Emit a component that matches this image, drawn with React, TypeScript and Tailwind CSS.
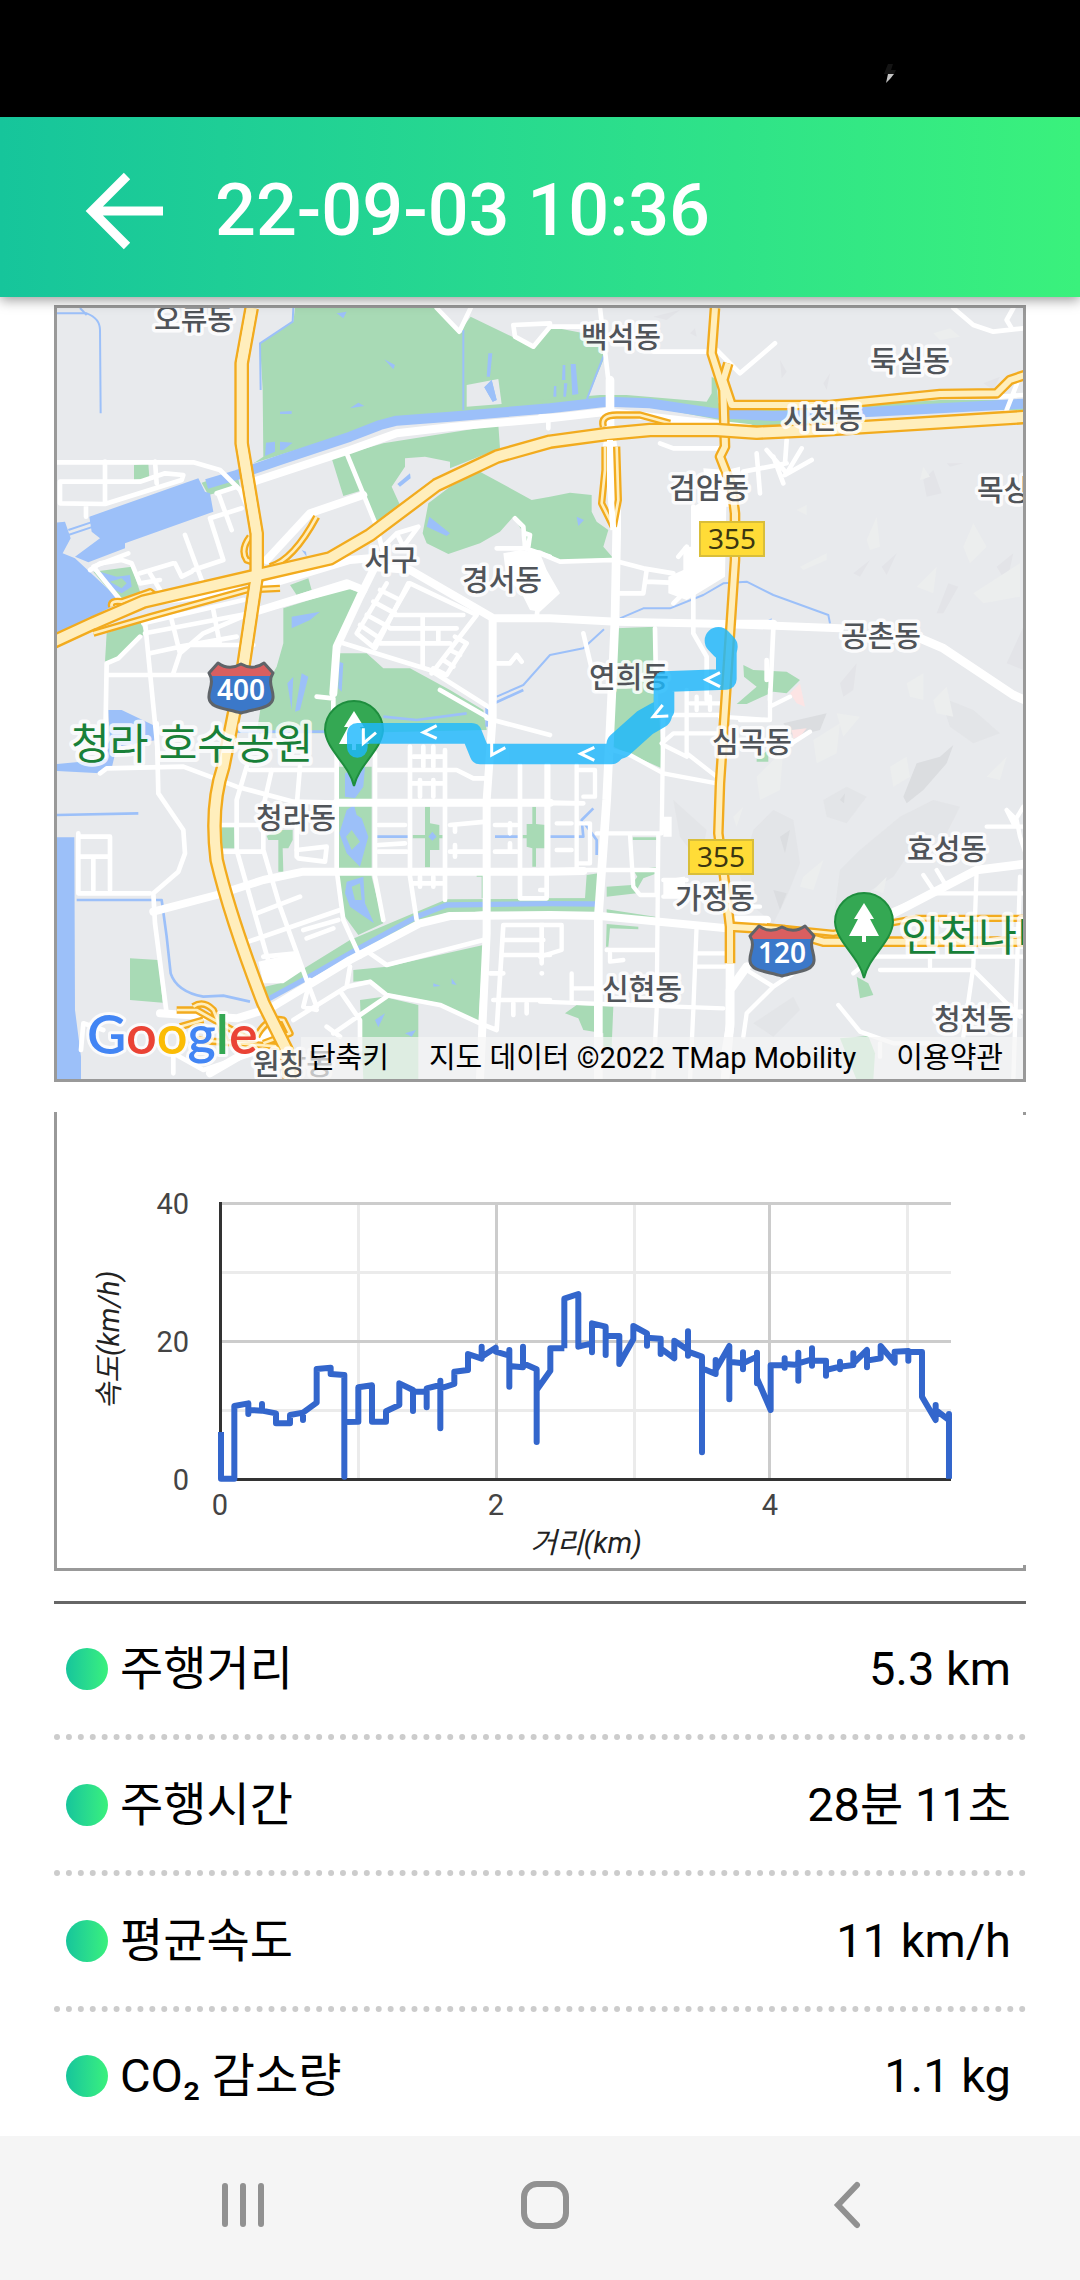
import React from "react";

const LAND = "#e8eaed";
const PARK = "#a8dab5";
const WATER = "#9cc0f9";

/* Map artwork is drawn in tiles; each tile has its own origin. */
const parks: [string, string[]][] = [
  ["translate(0 0)", [
    "M735 24H1160L1228 95L1262 50L1390 112L1450 145L1500 80L1665 112L1660 180L1610 300L1500 320L1240 335L1040 355L900 400L610 490L640 470L638 270L630 130L730 65Z",
    "M845 475L1000 430L1345 375L1350 445L1200 505V485L1125 470L1065 475V500L1025 560L1050 615L980 670L940 570L880 588Z",
    "M1290 515L1445 600L1500 590L1560 578L1625 585V635L1640 665L1675 690L1660 740L1690 775L1530 780L1470 750H1420L1415 690L1390 650L1350 695L1290 730L1195 762L1130 730L1118 700L1135 610L1200 560Z",
    "M252 495L295 490L298 535L252 540Z",
    "M720 855L775 835L785 870L740 885Z",
    "M130 815L245 800L275 890L210 910Z",
    "M170 1000L270 960L285 1000L200 1075L165 1085Z",
    "M700 925L890 865L935 880L875 1000L865 1060H950L1000 1105H1080L1200 1170L1300 1230L1310 1290L860 1300H620L640 1170L680 1100L700 1030Z",
    "M455 548L560 512L570 560L475 585Z",
  ]],
  ["translate(1470 0)", [
    "M515 230L530 240L535 310L700 330H1450V300H1200L900 320V372L600 380L540 360L330 320L200 300L0 320V300L180 285H260L500 305L515 280Z",
    "M230 985L345 980L352 1100L365 1405L220 1340Z",
    "M610 1095L640 1110L740 1115L780 1140L740 1180L700 1175L620 1212H590L650 1160L612 1130Z",
  ]],
  ["translate(0 1170)", [
    "M865 230H965V560L1000 700L925 735L870 660L862 540Z",
    "M240 805L325 810L338 938L240 930Z",
    "M645 890L690 880L900 750L1190 628L1650 625V665H1300L1190 668L1100 700L910 790L700 910L650 925Z",
    "M910 840L1010 830L1300 765L1285 1000L1170 940L1010 910L960 870L910 875Z",
    "M930 930L1000 920L1105 945V1170H940Z",
    "M515 412H552L555 475H515Z",
    "M650 438L680 420H728V450L715 475H698L700 545H685V450H655Z",
    "M1088 435H1125V350H1140V400L1168 405V435H1178V445H1168V480H1140V532H1125V445H1088Z",
    "M1418 435H1430V402H1447V350H1458V402L1488 405V475H1458V530H1447V475L1430 470V445H1418Z",
    "M1280 552H1300V625H1295V560H1280Z",
  ]],
  ["translate(1470 1170)", [
    "M140 555L175 550V640H0V625H135Z",
    "M200 590L275 585L290 610L200 620Z",
    "M280 540L355 530V548L310 565L290 600L278 580L292 560Z",
    "M200 658L355 682V692L200 668ZM200 702L295 710V718L210 715L205 770H198ZM278 442H355V490H350V450H278Z",
    "M75 970L110 945L220 950L215 1070L190 1070V1030L130 1020L115 985Z",
    "M950 860L985 880L1000 915L960 925Z",
    "M900 1045L985 1038L1005 1090L1000 1170H950Z",
    "M650 205L685 180V215H650Z",
  ]],
];

const waters: [string, string[]][] = [
  ["translate(0 0)", [
    "M0 670L45 665L62 715L38 760L75 775L215 905L0 1015Z",
    "M118 650L445 535L465 575L480 580L490 635L225 730V745L115 787L75 770L150 715L125 695Z",
    "M648 428L675 425V455L645 468ZM690 425L728 428L700 450H690ZM690 335L725 333V342H690ZM900 325L925 308L943 318ZM1003 178L1035 195L1030 208ZM860 40L890 35L880 55ZM1315 160H1327L1320 230H1310ZM1303 262L1325 240L1340 300L1328 305ZM1042 552L1080 520L1082 535L1050 560ZM1138 650L1200 700L1190 708L1130 680ZM755 750L768 755L770 770Z",
    "M150 815L200 830L240 825L245 860L215 880L175 860ZM725 950L810 935L780 960L725 985ZM868 1085L880 1090L875 1175L865 1165ZM712 1150L730 1130L725 1230ZM755 1120L775 1130L750 1230L735 1235Z",
  ]],
  ["translate(1470 0)", [
    "M92 192H107L115 282L97 285ZM68 195H76V240H66ZM42 258H49V290H40ZM72 250H82L78 290H70ZM110 650L132 660L115 678ZM680 962L695 955V967Z",
  ]],
  ["translate(0 1170)", [
    "M0 442H73L75 960L93 1100V1170H0Z",
    "M175 60H215L320 110V150L200 170L185 235L150 250L21 243V222L150 210L180 150Z",
    "M885 250L945 230L940 290L915 325L885 320ZM890 360L912 345L920 375L935 385L955 440L930 530L890 490L868 430ZM890 575L940 560L945 640L972 700L900 650L885 610Z",
    "M1135 440L1147 425L1160 440L1147 452ZM975 990L1005 970L985 1012ZM1205 865L1220 885L1205 882ZM1150 880L1172 888L1150 890ZM1065 1030L1098 1020L1085 1040Z",
  ]],
];

const streams: [string, number, string[]][] = [
  ["translate(0 0)", 30, ["M470 552L560 525L690 480L900 410L990 375L1040 362L1200 350L1500 325L1670 305L1800 310L2000 340L2170 348L2470 335L2670 325L2940 310"]],
  ["translate(0 0)", 6, [
    "M21 40H110Q150 55 150 90L152 340", "M1240 90V330", "M730 24L728 65L630 130L632 270",
    "M1340 1190L1420 1155L1500 1065L1600 1045L1662 988M1710 955L1780 925L1860 925L1960 885L2020 850L2090 845L2170 885L2335 945L2340 970",
    "M1610 300L1640 220L1662 165", "M55 690L130 665M55 705L130 680", "M90 24L110 45",
  ]],
  ["translate(0 1170)", 8, [
    "M600 935L520 917L460 920Q380 905 362 850L350 740L335 630H80",
    "M560 125H860", "M21 375L265 370", "M980 440H1075M1335 440H1405M1490 440H1600L1595 390L1630 355M1600 395L1640 450V495",
    "M1000 80L1100 90L1250 70", "M1310 110V50L1420 0",
  ]],
  ["translate(0 1170)", 16, ["M650 930L760 870L900 790L1100 680L1190 645L1490 641L1640 642"]],
];

const roads: [string, number, string[]][] = [
  ["translate(0 0)", 14, [
    "M21 487L430 487L510 510L570 570L600 640", "M165 485V610M30 545H270L345 520L400 525L395 540L165 612L30 610V545M315 485L320 550M108 615V650",
    "M610 545L900 450L1040 400L1100 390M890 460L980 680L1000 760", "M500 580L560 560M505 580L545 690M480 655L575 625M480 655L520 780L430 810M405 705L455 840M375 790L395 830L425 815M270 820L370 790M300 820L330 870",
    "M235 760L130 800L215 905", "M120 810L150 790L215 780L245 790L270 850L330 840",
    "M280 970L580 900M285 1000L600 940L900 860M300 1060L390 1040L560 1010M365 960L390 1060L370 1120M490 930L510 1035M285 965L325 1370M170 1125H490M165 1370L170 1090L205 1075L270 1010M390 1060L460 1000L600 940M420 1035H610",
    "M1000 740L1040 700L1105 680L1060 740L1040 700", "M1395 655L1420 680L1425 745L1340 745M1425 745L1500 770M1425 700L1440 705L1435 740",
    "M1010 850L920 1000L975 1045L1075 850M990 870L1050 900M970 905L1035 940M950 945L1015 980M930 975L990 1015",
    "M880 1030L1140 1110L1330 1230M970 1040L1080 850L1280 945L1145 1120M1035 945H1240M1020 985L1220 985M990 1030H1200M1118 950V1100M1165 985V1030M1215 1010L1250 1030L1190 1125L1150 1105M1340 1090H1380L1400 1065L1415 1085M1200 1050L1230 1065M1180 1080L1210 1100",
    "M1160 24L1228 95L1262 24M1390 75L1500 70M1390 75L1395 110L1450 140L1500 80L1650 80M1470 870L1460 950",
    "M1600 1000L1640 1170",
  ]],
  ["translate(0 0)", 24, [
    "M610 545L900 450L1040 400L1210 380L1500 355L1670 335L1800 350L2100 385", "M650 780L780 640L940 585", "M960 800L1080 810L1330 955H1500L1700 965L2030 972L2370 985",
    "M980 790L930 890L860 1040L850 1180", "M340 900L600 870L900 780L960 775", "M600 940L890 850L940 870", "M1328 960V1250L1310 1500V1900L1290 2337",
  ]],
  ["translate(1470 0)", 14, [
    "M180 24L205 240L210 350", "M340 155H510M530 150L600 220L705 130", "M210 380L195 440M360 430L400 445H540", "M650 460L660 580M680 450L740 520L785 445M740 420L735 490M700 470L730 550M735 525L815 480M610 515L740 490",
    "M0 760L60 785L215 780L310 805L400 820M235 880H310L320 810M320 845L440 850M440 740L415 770M460 620V1000L500 1070V1200M345 985L350 1250",
    "M700 985L690 1200M680 1080V1140", "M1240 24L1300 75L1360 95L1450 85M1420 24L1400 60L1415 85", "M1435 240L1400 330M1380 290L1450 285", "M0 350L210 340M25 350V385", "M1150 1020L1210 1040L1430 1190",
    "M400 910L440 870",
  ]],
  ["translate(1470 0)", 26, ["M210 240V380L230 520V700L225 960L215 1190L200 1500L175 1850V2337", "M575 972H700", "M1140 1015L1210 1045L1420 1185L1500 1220"]],
  ["translate(0 1170)", 14, [
    "M150 250L170 235L400 230L560 290L730 335L860 338H1500L1600 340", "M320 100L325 310L400 420L405 490L385 545L310 610L315 700L350 970", "M85 430V610H300M90 440H180V600M85 500H180M130 505V600",
    "M590 230L560 330V480L620 690L660 830M665 240L640 350V480L690 650L770 870L800 950M750 230L740 350V500M515 405H640M520 485H640M600 240H860",
    "M620 670L750 620M595 755L870 660M740 480L830 470L825 515L745 505M640 800L740 790M760 720L865 690M770 745L850 715",
    "M860 180V540L880 690L930 800M975 190V560L1000 690M975 240L1220 240L1270 265H1310M1080 170V560L1100 690M1185 180V630M1410 225V625H1490M1490 225V620",
    "M985 405H1065M985 485H1070M1200 485H1300M1200 405L1310 395M1335 485H1400M1085 280H1180M1085 580H1180M1335 405H1400M985 465L1065 460M1090 200H1180",
    "M1120 170V230M1150 170V230M1110 270V320M1150 270V320M1110 560V590M1150 560V590M1215 405V425M1215 465V500M1380 400V430M1380 460V485",
    "M1310 670L1190 680M960 790L1010 825L1300 750M890 890L960 875L1010 915L1170 945L1290 1000L1340 1020L1360 705L1480 705M1360 750H1480M1360 795H1500M1475 705V820M1320 850H1360M1330 930H1500M1390 940V975M1430 940V970M1475 850H1476",
    "M730 990L890 890L900 830M850 1030L1010 920M875 910L930 990V1080M780 870L760 950L800 960M830 1010L870 1040M93 1080L100 1000L160 1020M370 1150V1090L460 1140L640 1080",
    "M800 20L850 25V120M1170 0L1310 80M1310 85L1500 135",
  ]],
  ["translate(0 1170)", 24, [
    "M310 665L500 615L640 570L760 545H1500L1600 543", "M330 970L560 985L660 955L900 810L1110 700L1200 678L1500 675L1650 678L2030 715", "M860 338H1500", "M690 1000L600 1080L480 1150",
  ]],
  ["translate(1470 1170)", 13, [
    "M215 180L270 195L370 250L530 280", "M370 80L365 430H170M270 435L280 590L300 615H350V540H180M355 430L350 960L340 1170M25 225V540M110 225V540M0 340H110M0 540H180M0 600H20M50 400H95M50 480H95M110 240H165V320H130M110 400H150V520H110",
    "M380 75H540M440 0V190L530 260M365 160L400 130H540M690 0V90L540 80M470 20V60M510 20V60M450 40H540M370 165L440 200M690 50L750 20M740 170L810 125M600 90H690",
    "M200 780H350M355 700L470 705L460 960L450 1170M470 790H560M470 830H555M0 935L550 955M95 850V930M100 895H170M0 800L65 780V705H0M210 790V815L250 810",
    "M620 840L700 890L760 850M700 890L620 970L610 1040M370 570H440M370 620H430M560 650H660",
    "M1060 660L1180 610L1450 610M1310 540L1300 830L1270 1040M1150 555L1180 600M1190 540L1220 590M1340 410H1450M1400 360L1420 400L1450 350M1400 360L1430 390L1440 440L1460 500M940 850L1000 800H1450M1020 840H1300L1440 980M1170 790V830M1270 960L1450 965M1440 560L1420 1170",
    "M895 945L960 1025L1060 1060H1200M1020 1060V1100",
  ]],
  ["translate(1470 1170)", 26, ["M620 830L570 900V1010L550 1130", "M1060 670L1310 540L1470 520", "M570 700V1000L555 1170", "M590 690L680 690"]],
];

const highways: [number, string[]][] = [
  [22, [
    "M660 800Q730 780 800 650", "M600 710Q570 750 590 780L620 790", "M130 1000L300 950L590 870L690 865", "M185 920Q180 900 215 905L300 875L320 890",
    "M1665 440V510L1655 610L1690 680M1700 440L1705 600L1690 680", "M1660 380Q1650 345 1700 345H1770L1860 370",
    "M380 2130L440 2130L600 2220M430 2120Q460 2100 490 2130L530 2230M390 2180L460 2160M620 2210Q650 2150 700 2160L720 2200L640 2230M440 2220L690 2240",
    "M2150 1880L2350 1900L2600 1855H2940",
  ]],
  [32, ["M1995 24L1985 160L2020 270L2025 440L2010 470L2045 560L2055 640V780L2030 1150L2010 1450L2005 1600L2025 1750L2040 1880V1990", "M2035 190L2020 240L2045 315L2340 315L2670 282L2840 280L2880 240L2940 220", "M2040 1880L2200 1890L2320 1925H2940"]],
  [44, ["M605 24L575 190V430L620 700V830L580 1100L520 1400Q480 1520 500 1680Q540 1850 640 2110L710 2250L720 2340", "M0 1030L130 970L280 905L840 775L960 705L1160 555L1340 470L1500 425L1670 402L1800 390H2000L2120 398L2300 390L2940 350"]],
];

const labels: [string, number, number][] = [
  ["오류동", 137, 22], ["서구", 334, 263], ["경서동", 445, 283], ["백석동", 564, 40], ["둑실동", 853, 64],
  ["시천동", 766, 121], ["검암동", 652, 191], ["목상동", 960, 193], ["공촌동", 824, 339], ["연희동", 572, 380],
  ["청라동", 239, 521], ["원창동", 236, 767], ["심곡동", 695, 445], ["효성동", 890, 552], ["가정동", 658, 601],
  ["신현동", 585, 692], ["청천동", 917, 722],
];

const FONT = "font-[Roboto,'Noto_Sans_CJK_KR',sans-serif]";

function Pin({ x, y }: { x: number; y: number }) {
  return (
    <g transform={`translate(${x} ${y})`}>
      <path d="M0 56C-5 34-28 20-29 0A29 29 0 0 1 29 0C28 20 5 34 0 56Z" fill="#34a853" stroke="#1e8e3e" strokeWidth="2" />
      <path d="M0-19L10-3H6L15 14H2V20H-2V14H-15L-6-3H-10Z" fill="#fff" />
    </g>
  );
}

function Shield({ x, y, label }: { x: number; y: number; label: string }) {
  return (
    <g transform={`translate(${x} ${y})`}>
      <path d="M-23-25Q-12-17 0-24Q12-17 23-25L32-15C26-5 33 2 32 10C31 20 17 20 0 25C-17 20-31 20-32 10C-33 2-26-5-32-15Z" fill="#3b78c9" />
      <path d="M-23-25Q-12-17 0-24Q12-17 23-25L32-15L29-12H-29L-32-15Z" fill="#d95f60" />
      <path d="M-23-25Q-12-17 0-24Q12-17 23-25L32-15C26-5 33 2 32 10C31 20 17 20 0 25C-17 20-31 20-32 10C-33 2-26-5-32-15Z" fill="none" stroke="#5f6469" strokeWidth="3" strokeLinejoin="round" />
      <text y="12" textAnchor="middle" className="font-['Noto_Sans',sans-serif] text-[28px] font-semibold" fill="#fff">{label}</text>
    </g>
  );
}

function RoadSign({ x, y }: { x: number; y: number }) {
  return (
    <g transform={`translate(${x} ${y})`}>
      <rect x="-32" y="-17" width="64" height="34" fill="#ffdc37" stroke="#d9be3a" strokeWidth="2" />
      <text y="10" textAnchor="middle" className="font-['Noto_Sans',sans-serif] text-[28px]" fill="#3b3610">355</text>
    </g>
  );
}

function RideMap() {
  return (
    <section aria-label="주행 지도" className="relative overflow-hidden border-[3px] border-[#999]">
      <svg viewBox="0 0 966 771" className="block w-full" role="img" aria-label="주행 경로">
        <rect width="966" height="771" fill={LAND} />
        <g transform="translate(-7 -8) scale(0.33333)" strokeLinejoin="round" fill="none">
          <g transform="translate(1470 0)" fill="#e3e4e8">
            <path d="M450 100L465 85L470 110ZM720 180L740 215L725 235ZM850 250L870 220L860 270ZM1150 540L1180 510L1205 580L1160 590ZM1190 940L1225 850L1255 860L1210 940ZM1025 800L1070 760L1040 825ZM1370 800L1420 760L1400 850ZM1400 1090L1450 980V1110ZM900 1150L950 1090L940 1170L910 1190ZM1330 250L1380 230L1360 270ZM340 50L420 30L380 60ZM1220 490H1270L1230 500ZM940 820L990 780L960 830Z" />
            <path fill="#eceeee" d="M1150 500L1170 530L1140 540ZM980 720L1010 650L1020 740L990 750ZM1270 740L1300 670L1340 740L1290 790ZM780 800L860 760L860 780L790 810ZM1300 880L1440 790V890L1330 910ZM1100 1150L1150 1120L1150 1200L1110 1190ZM770 630L800 615V645ZM1180 100L1230 85L1260 110L1200 120ZM1130 860L1190 800L1180 880Z" />
          </g>
          <g transform="translate(1470 1170)" fill="#e1e3e6">
            <path d="M600 560L640 420L700 360L760 390L780 520L740 620L700 700L640 650ZM880 690L900 540L960 480L1080 380L1180 330L1260 350L1220 430L1120 470L1060 560L960 620ZM1200 20L1300 60L1380 130L1300 160L1230 110ZM850 330L920 290L980 320L920 400L860 380ZM400 330L500 420L480 520L420 440ZM640 1000L760 920L780 960L700 1040Z" opacity="0.7" />
            <path fill="#dbdde0" d="M1090 320L1130 220L1200 200L1240 165L1220 220L1150 300L1100 340ZM730 100L860 70L840 120L760 140ZM720 440L750 420L735 490ZM900 330L915 310L912 340ZM700 600L740 610L720 660Z" />
            <path fill="#eceeee" d="M650 260L730 180L720 300L660 330ZM1050 230L1100 200L1110 260L1060 290ZM820 150L900 100L890 190L830 220ZM1180 30L1220 -10L1240 80L1190 70ZM790 560L850 510L820 600L780 590ZM1340 260L1400 200L1380 270ZM890 70L960 80L910 140ZM580 380L610 350L590 410ZM1000 600L1040 560L1030 610Z" />
            <path fill="#fce4e4" d="M750 10L780 -20L795 50L770 40ZM755 120L800 115L780 140L760 145Z" />
          </g>
          {parks.map(([t, ds]) => <g key={t} transform={t} fill={PARK}>{ds.map((d) => <path key={d} d={d} />)}</g>)}
          <path d="M1250 255L1345 237L1355 312L1250 320Z" fill={LAND} />
          {waters.map(([t, ds]) => <g key={t} transform={t} fill={WATER}>{ds.map((d) => <path key={d} d={d} />)}</g>)}
          <path d="M1303 262L1325 240L1340 300L1328 305Z" fill={WATER} />
          <path d="M180 845L215 835L230 850L215 865ZM888 1610L905 1590L930 1625L905 1650ZM905 1760L930 1750L935 1800L915 1800Z" fill={PARK} />
          {streams.map(([t, w, ds], i) => <g key={i} transform={t} stroke={WATER} strokeWidth={w}>{ds.map((d) => <path key={d} d={d} />)}</g>)}
          {roads.map(([t, w, ds], i) => <g key={i} transform={t} stroke="#fff" strokeWidth={w} strokeLinecap="round">{ds.map((d) => <path key={d} d={d} />)}</g>)}
          <g transform="translate(1470 0)" fill="#fff">
            <path d="M460 620L560 560L555 830L490 870L440 900L385 880V830L430 810V740H460Z" />
            <path d="M490 505L560 510L600 500V620H500ZM0 760L20 810L60 880L0 935L-30 930L-60 870L-100 840L-110 760L-60 750Z" />
          </g>
          <path d="M625 1985L735 1960L760 2010L700 2050L640 2050ZM1840 1550H1865V1610H1840ZM1900 1730H1905V1790H1840V1740Z" fill="#fff" />
          {highways.map(([w, ds]) => (
            <g key={w}>
              <g stroke="#f2ab1e" strokeWidth={w}>{ds.map((d) => <path key={d} d={d} />)}</g>
              <g stroke="#ffeebc" strokeWidth={w - 14}>{ds.map((d) => <path key={d} d={d} />)}</g>
            </g>
          ))}
          <path d="M605 24L575 190V430L620 700V830L580 1100" stroke="#ffeebc" strokeWidth="28" />
          <path d="M1680 420V560L1690 690" stroke="#fff" strokeWidth="18" />
        </g>

        <g className={`${FONT} text-[29px] font-medium`} fill="#505459" stroke="#fff" strokeOpacity="0.85" strokeWidth="7" strokeLinejoin="round" textAnchor="middle" paintOrder="stroke">
          {labels.map(([name, x, y]) => <text key={name} x={x} y={y}>{name}</text>)}
        </g>
        <Shield x={184} y={380} label="400" />
        <Shield x={725} y={643} label="120" />
        <RoadSign x={675} y={231} />
        <RoadSign x={664} y={549} />
        <g className={`${FONT} text-[42px]`} fill="#188038" stroke="#fff" strokeOpacity="0.8" strokeWidth="8" strokeLinejoin="round" paintOrder="stroke">
          <text x="14" y="451">청라 호수공원</text>
          <text x="844" y="643">인천나비공원</text>
        </g>
        <Pin x={297} y={422} />
        <Pin x={807} y={614} />

        <g transform="translate(-7 -8) scale(0.33333)" fill="none" strokeLinecap="round" strokeLinejoin="round">
          <g opacity="0.82">
            <path d="M2029 1040V1138L1842 1145V1230L1775 1275L1685 1362H1290L1265 1300H922V1342" stroke="#1eb8fc" strokeWidth="62" />
            <path d="M2005 1022L2022 1040M1825 1245L1785 1268L1710 1335" stroke="#1eb8fc" strokeWidth="82" />
          </g>
          <g stroke="#fff" strokeWidth="9" strokeLinejoin="miter" strokeLinecap="butt">
            <path d="M2010 1118L1968 1139L2010 1160" />
            <path d="M1838 1215L1810 1250L1855 1248" />
            <path d="M1633 1342L1592 1361L1633 1381" />
            <path d="M1325 1320V1365L1366 1343" />
            <path d="M1160 1277L1120 1297L1160 1315" />
            <path d="M940 1285V1330L978 1298" />
          </g>
        </g>

        <text x="30" y="746" className="font-[Lato,sans-serif] text-[54px] font-semibold" stroke="#fff" strokeOpacity="0.8" strokeWidth="6" paintOrder="stroke" strokeLinejoin="round">
          <tspan fill="#4285f4">G</tspan><tspan fill="#ea4335">o</tspan><tspan fill="#fbbc05">o</tspan><tspan fill="#4285f4">g</tspan><tspan fill="#34a853">l</tspan><tspan fill="#ea4335">e</tspan>
        </text>
      </svg>
      <div className="absolute right-0 bottom-0 flex h-[42px] items-center bg-[#f5f5f5]/70 text-[29px] leading-[42px] whitespace-nowrap text-black">
        <button type="button" className="pr-5 pl-2">단축키</button>
        <span className="px-5">지도 데이터 ©2022 TMap Mobility</span>
        <a href="#terms" className="px-5">이용약관</a>
      </div>
    </section>
  );
}

const seriesLeft =
  "M543 1026V1166H583V948L625 940V972V960L666 962V942V962L708 970V1000H750V975L789 968V990V968L830 938V837L872 833V852L913 855V1160V996L955 995V892L996 886V995H1038V964L1078 945V880L1119 900V963V905H1160V952V895L1201 885V872V1015V895L1243 882V845L1284 840V792L1325 806V770V800L1367 773V785L1408 797V780V890V828L1449 832V770V820L1490 838V1056V900L1531 842V775H1573";
const seriesRight =
  "M133 775V626L175 612V770L216 760V787V700L257 710V795V738H298V822L340 748V708L381 730V767V743L422 746V792V775L463 805V752L504 780V724V797V785L546 800V1087V835L587 852V810V840L628 768V928V815L669 820V787V838V820L711 800V788V880V865L752 960V826L794 825V805V833V822L835 825V788V872V820L876 808V775V827V812H918V857V840L960 830V815V838V830L1000 825V790V820L1041 780V832V812L1082 805V768L1124 818V785L1165 783V812V785L1206 786V920L1247 990V945V960L1287 990V972V1166";

function SpeedChart() {
  return (
    <section aria-label="속도 그래프" className="relative border-b-[3px] border-l-[3px] border-[#999]">
      <span className="absolute top-0 right-0 size-[3px] bg-[#999]" />
      <span className="absolute right-0 bottom-0 size-[3px] bg-[#999]" />
      <svg viewBox="0 0 969 456" className="block w-full" role="img" aria-label="거리별 속도">
        <g stroke="#ebebeb" strokeWidth="3">
          <path d="M163 160.5H894M163 298.5H894M301.5 93V367M577.5 93V367M850.5 93V367" />
        </g>
        <path d="M163 91.5H894M163 229.5H894M439.5 91V367M712.5 91V367" stroke="#ccc" strokeWidth="3" />
        <path d="M163.5 90V369M162 367.5H894" stroke="#333" strokeWidth="3" />
        <g transform="translate(-17 -22) scale(0.33333)" fill="none" stroke="#3366cc" strokeWidth="18" strokeLinejoin="round">
          <path d={seriesLeft} />
          <path d={seriesRight} transform="translate(1440 0)" />
        </g>
        <g className="text-[29px]" fill="#444">
          <g textAnchor="end">
            <text x="132" y="102">40</text>
            <text x="132" y="240">20</text>
            <text x="132" y="378">0</text>
          </g>
          <g textAnchor="middle">
            <text x="163" y="403">0</text>
            <text x="439" y="403">2</text>
            <text x="713" y="403">4</text>
          </g>
        </g>
        <g className="text-[29px] italic" fill="#222" textAnchor="middle">
          <text x="529" y="441">거리(km)</text>
          <text x="0" y="0" transform="translate(62 228) rotate(-90)">속도(km/h)</text>
        </g>
      </svg>
    </section>
  );
}

const stats: { label: string; value: string }[] = [
  { label: "주행거리", value: "5.3 km" },
  { label: "주행시간", value: "28분 11초" },
  { label: "평균속도", value: "11 km/h" },
  { label: "CO₂ 감소량", value: "1.1 kg" },
];

export default function App() {
  return (
    <div className={`flex min-h-screen flex-col bg-white text-black ${FONT}`}>
      <div className="flex h-[117px] items-start justify-end bg-black pt-16 pr-[184px]">
        <svg width="12" height="20" viewBox="0 0 12 20" aria-hidden="true">
          <path d="M4 0H9L7 6H12L10 10H0Z" fill="#141414" />
          <path d="M4 10H10L6 15L2 19Z" fill="#c4c4c4" />
        </svg>
      </div>

      <header className="relative z-10 flex h-[180px] items-center gap-[52px] bg-linear-to-r from-[#16c59b] to-[#3af17c] pt-2 pl-[85px] text-white shadow-[0_3px_12px_rgba(0,0,0,0.4)]">
        <button type="button" aria-label="뒤로">
          <svg width="78" height="78" viewBox="0 0 78 78" fill="none" stroke="#fff" strokeWidth="9" className="block">
            <path d="M42 4L7 39L42 74M8 39H78" />
          </svg>
        </button>
        <h1 className="text-[72px] leading-none font-medium">22-09-03 10:36</h1>
      </header>

      <main className="flex flex-1 flex-col gap-[30px] px-[54px] pt-2">
        <RideMap />
        <SpeedChart />
        <dl className="border-t-[3px] border-[#666] text-[47px]">
          {stats.map((s) => (
            <div key={s.label} className="flex h-[136px] items-center border-b-[6px] border-dotted border-[#ccc] pr-[15px] pl-3 last:h-[124px] last:border-b-0 last:pt-1">
              <dt className="flex items-center gap-3">
                <span className="size-[42px] rounded-full bg-linear-to-r from-[#16c59b] to-[#3af17c]" />
                {s.label}
              </dt>
              <dd className="ml-auto">{s.value}</dd>
            </div>
          ))}
        </dl>
      </main>

      <nav aria-label="시스템" className="grid h-36 grid-cols-3 place-items-center bg-[#f5f5f5] pr-[82px] pb-1.5 pl-[92px]">
        <button type="button" aria-label="최근 앱">
          <svg width="48" height="48" viewBox="0 0 48 48" stroke="#919191" strokeWidth="6" strokeLinecap="round" className="block"><path d="M6 5V43M24 5V43M42 5V43" /></svg>
        </button>
        <button type="button" aria-label="홈">
          <svg width="48" height="48" viewBox="0 0 48 48" fill="none" stroke="#919191" strokeWidth="6" className="block"><rect x="3" y="3" width="42" height="42" rx="13" /></svg>
        </button>
        <button type="button" aria-label="이전">
          <svg width="48" height="48" viewBox="0 0 48 48" fill="none" stroke="#919191" strokeWidth="6" strokeLinecap="round" className="block"><path d="M34 4L15 24L34 44" /></svg>
        </button>
      </nav>
    </div>
  );
}
